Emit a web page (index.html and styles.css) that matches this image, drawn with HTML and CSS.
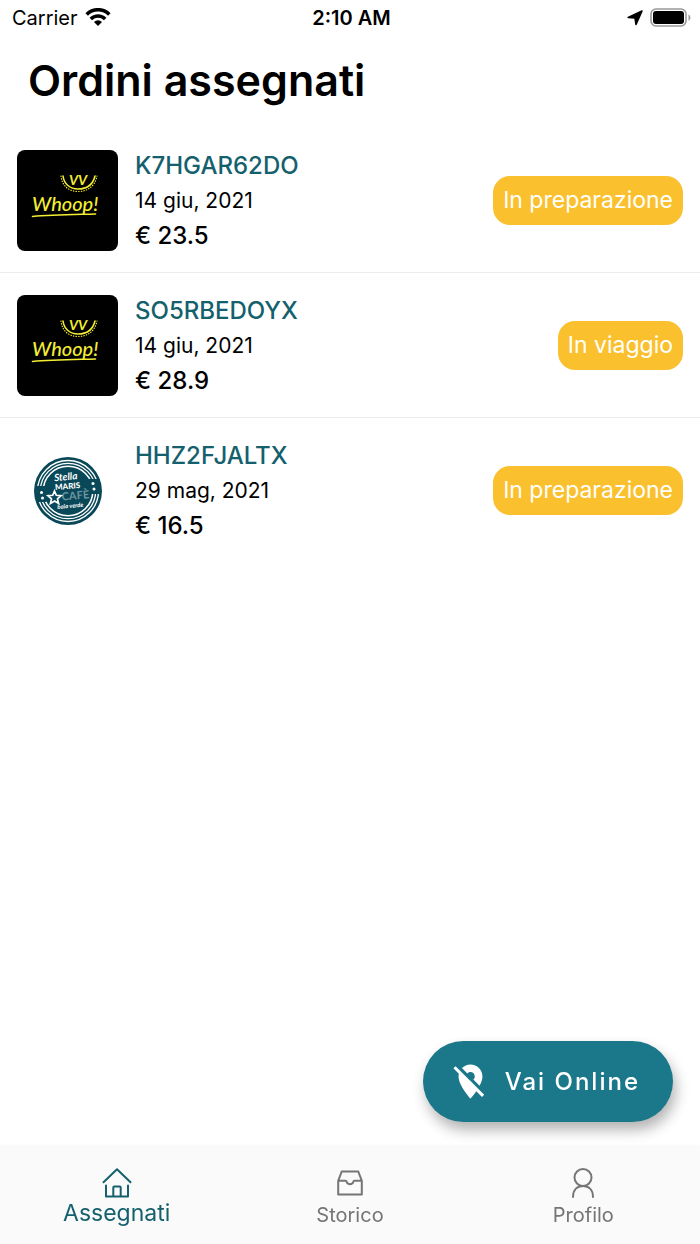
FILE: index.html
```html
<!DOCTYPE html>
<html lang="it">
<head>
  <meta charset="UTF-8">
  <meta name="viewport" content="width=device-width, initial-scale=1.0">
  <title>Ordini assegnati</title>
  <link rel="stylesheet" href="styles.css">
</head>
<body>
  <header class="status-bar">
    <div class="status-bar__carrier">
      <span>Carrier</span>
      <svg width="26" height="20" viewBox="0 0 26 20" fill="none" stroke="#000" stroke-width="3.600" aria-hidden="true">
        <path d="M1.700 6.400a16 16 0 0 1 22.600 0"/>
        <path d="M5.800 11a10.200 10.200 0 0 1 14.400 0"/>
        <path fill="#000" stroke="none" d="M13 18l-4-4a5.700 5.700 0 0 1 8 0z"/>
      </svg>
    </div>
    <div class="status-bar__time">2:10 AM</div>
    <div class="status-bar__icons">
      <svg width="16" height="16" viewBox="0 0 16 16" aria-hidden="true">
        <path d="M15 1L9 14.500 8 8 1.200 7.500z" stroke="#000" stroke-width="1.600" stroke-linejoin="round"/>
      </svg>
      <svg width="41" height="20" viewBox="0 0 41 20" aria-hidden="true">
        <rect x="1" y="1" width="35" height="17" rx="5" fill="none" stroke="#999" stroke-width="1.600"/>
        <rect x="3" y="3" width="31" height="13" rx="3"/>
        <path fill="#999" d="M38.500 6.500c2.500.8 2.500 5.500 0 6.300z"/>
      </svg>
    </div>
  </header>

  <main class="orders">
    <h1 class="orders__title">Ordini assegnati</h1>

    <ul class="orders__list">
      <li class="order">
        <svg class="order__logo" viewBox="0 0 101 101" role="img" aria-label="Whoop!">
          <rect width="101" height="101"/>
          <g fill="none" stroke="#f4ee33" stroke-linecap="round">
            <path stroke-width="1.600" d="M46 26c1 8 7 13 15 13 9 0 15-5 17-13"/>
            <path stroke-width="1.200" stroke-dasharray="0.400 2.200" d="M44 26c1 10 8 15.500 17 15.500 10 0 17-5.500 19-15.500"/>
            <path stroke-width="1.600" d="M15.500 66.500c20-2 44-2 63-2.500"/>
          </g>
          <text class="whoop whoop--small" x="52" y="35">VV</text>
          <text class="whoop" x="15" y="61">Whoop!</text>
        </svg>
        <div class="order__info">
          <div class="order__code">K7HGAR62DO</div>
          <div class="order__date">14 giu, 2021</div>
          <div class="order__price">€ 23.5</div>
        </div>
        <span class="order__status">In preparazione</span>
      </li>
      <li class="order">
        <svg class="order__logo" viewBox="0 0 101 101" role="img" aria-label="Whoop!">
          <rect width="101" height="101"/>
          <g fill="none" stroke="#f4ee33" stroke-linecap="round">
            <path stroke-width="1.600" d="M46 26c1 8 7 13 15 13 9 0 15-5 17-13"/>
            <path stroke-width="1.200" stroke-dasharray="0.400 2.200" d="M44 26c1 10 8 15.500 17 15.500 10 0 17-5.500 19-15.500"/>
            <path stroke-width="1.600" d="M15.500 66.500c20-2 44-2 63-2.500"/>
          </g>
          <text class="whoop whoop--small" x="52" y="35">VV</text>
          <text class="whoop" x="15" y="61">Whoop!</text>
        </svg>
        <div class="order__info">
          <div class="order__code">SO5RBEDOYX</div>
          <div class="order__date">14 giu, 2021</div>
          <div class="order__price">€ 28.9</div>
        </div>
        <span class="order__status">In viaggio</span>
      </li>
      <li class="order">
        <svg class="order__logo" viewBox="0 0 101 101" role="img" aria-label="Stella Maris Cafè">
          <circle cx="51" cy="51" r="34" fill="#094858"/>
          <g fill="none" stroke="#fff">
            <circle cx="51" cy="51" r="30.500" stroke-width="1.300"/>
            <circle cx="51" cy="51" r="27.700" stroke-width="1.300"/>
            <circle cx="51" cy="51" r="24.800" stroke-width="1.600"/>
          </g>
          <path fill="#094858" d="M19.500 46h10v16h-10zM71.500 39h11v15h-11z"/>
          <g fill="#fff">
            <circle cx="24.500" cy="52.500" r="1.500"/>
            <circle cx="25.500" cy="58" r="1.500"/>
            <circle cx="76" cy="43.500" r="1.500"/>
            <circle cx="77" cy="49" r="1.500"/>
          </g>
          <g transform="rotate(-5 51 51)">
            <text class="stella stella--name" x="50" y="40">Stella</text>
            <text class="stella stella--maris" x="51" y="49">MARIS</text>
            <text class="stella stella--cafe" x="58" y="60">CAFÈ</text>
            <text class="stella stella--place" x="52" y="68">baia verde</text>
          </g>
          <path fill="none" stroke="#fff" stroke-width="1.700" d="M37.500 51l1.800 4.300 4.700.400-3.500 3.200 1.100 4.600-4-2.500-4.200 2.500 1.100-4.600-3.600-3.200 4.800-.400z"/>
        </svg>
        <div class="order__info">
          <div class="order__code">HHZ2FJALTX</div>
          <div class="order__date">29 mag, 2021</div>
          <div class="order__price">€ 16.5</div>
        </div>
        <span class="order__status">In preparazione</span>
      </li>
    </ul>
  </main>

  <button class="go-online" type="button">
    <svg width="41" height="41" viewBox="0 0 24 24" fill="#fff" aria-hidden="true">
      <path d="M12 6.500c1.380 0 2.500 1.120 2.500 2.500 0 .74-.33 1.390-.83 1.850l3.630 3.630c.98-1.860 1.700-3.800 1.700-5.480 0-3.870-3.130-7-7-7-1.980 0-3.760.83-5.040 2.150l3.190 3.190c.46-.52 1.110-.84 1.850-.84zm4.370 9.600l-4.630-4.630-.11-.11L3.270 3 2 4.270l3.180 3.180C5.070 7.950 5 8.470 5 9c0 5.250 7 13 7 13s1.670-1.850 3.380-4.350L18.730 21 20 19.730l-3.630-3.630z"/>
    </svg>
    <span>Vai Online</span>
  </button>

  <nav class="tabs">
    <a class="tabs__item is-active" href="#assegnati">
      <svg class="tabs__icon" viewBox="0 0 32 32" aria-hidden="true">
        <path d="M2.500 15.300L16 2.300l13.500 13M5 18.500v11h22v-11M12.300 29.500v-9q0-1 1-1h5.400q1 0 1 1v9"/>
      </svg>
      <span>Assegnati</span>
    </a>
    <a class="tabs__item" href="#storico">
      <svg class="tabs__icon" viewBox="0 0 32 32" aria-hidden="true">
        <path d="M7.700 4.500h16.600l3.500 9.300v13.700H4.200V13.800zM4.200 13.800h7.300q1 0 1.200 1c.4 1.600 1.600 2.400 3.300 2.400s2.900-.8 3.300-2.400q.2-1 1.200-1h7.300"/>
      </svg>
      <span>Storico</span>
    </a>
    <a class="tabs__item" href="#profilo">
      <svg class="tabs__icon" viewBox="0 0 32 32" aria-hidden="true">
        <circle cx="16" cy="10.500" r="8.500"/>
        <path d="M6 30c0-7 4-11 10-11s10 4 10 11"/>
      </svg>
      <span>Profilo</span>
    </a>
  </nav>
</body>
</html>
```
FILE: styles.css
```css
:root {
  --teal: #1b788a;
  --teal-dark: #14616d;
  --yellow: #fbc02d;
  --grey: #757575;
}

* {
  box-sizing: border-box;
}

body {
  display: flex;
  flex-direction: column;
  min-height: 100vh;
  margin: 0;
  background: white;
  color: black;
  font-family: 'Inter', sans-serif;
}

.status-bar {
  display: grid;
  grid-template-columns: 1fr auto 1fr;
  align-items: center;
  height: 36px;
  padding: 0 9px 0 12px;
  font-size: 20px;
}

.status-bar__carrier,
.status-bar__icons {
  display: flex;
  align-items: center;
  gap: 7px;
}

.status-bar__icons {
  justify-content: flex-end;
}

.status-bar__time {
  font-weight: 600;
}

.orders {
  flex: 1;
}

.orders__title {
  margin: 0;
  padding: 14px 28px 18px;
  font-size: 43px;
  font-weight: 600;
  line-height: 60px;
}

.orders__list {
  margin: 0;
  padding: 0;
  list-style: none;
}

.order {
  display: flex;
  align-items: center;
  gap: 17px;
  height: 145px;
  padding: 0 17px;
  border-bottom: 1px solid #ececec;
}

.order:last-child {
  border-bottom: 0;
}

.order__logo {
  flex: none;
  width: 101px;
  height: 101px;
  border-radius: 8px;
}

.order__info {
  flex: 1;
  font-size: 24px;
  line-height: 35px;
}

.order__code {
  color: var(--teal-dark);
  font-weight: 500;
}

.order__date {
  font-size: 21px;
}

.order__price {
  font-weight: 500;
}

.order__status {
  padding: 0 10px;
  border-radius: 17px;
  background: var(--yellow);
  color: white;
  font-size: 23px;
  line-height: 49px;
}

.whoop {
  fill: #f4ee33;
  font-family: 'Lato', sans-serif;
  font-size: 20px;
  font-style: italic;
  font-weight: 500;
}

.whoop--small {
  font-size: 14px;
  font-weight: 700;
}

.stella {
  fill: white;
  font-family: 'Lato', sans-serif;
  font-weight: 700;
  text-anchor: middle;
}

.stella--name {
  font-size: 10px;
  font-style: italic;
}

.stella--maris {
  font-size: 8px;
  font-weight: 900;
}

.stella--cafe {
  fill: #6f95a0;
  font-size: 11px;
}

.stella--place {
  font-size: 6px;
  font-style: italic;
}

.go-online {
  position: fixed;
  right: 27px;
  bottom: 122px;
  display: flex;
  align-items: center;
  gap: 14px;
  height: 81px;
  padding: 0 33px 0 27px;
  border: 0;
  border-radius: 41px;
  background: var(--teal);
  box-shadow: 3px 8px 14px rgba(0, 0, 0, 0.3);
  color: white;
  font-family: inherit;
  font-size: 24px;
  font-weight: 500;
  letter-spacing: 2px;
}

.tabs {
  position: sticky;
  bottom: 0;
  display: flex;
  height: 98px;
  background: #fafafa;
  box-shadow: 0 0 3px rgba(0, 0, 0, 0.06);
}

.tabs__item {
  flex: 1;
  display: flex;
  flex-direction: column;
  align-items: center;
  padding-top: 21px;
  color: var(--grey);
  font-size: 20px;
  line-height: 32px;
  text-decoration: none;
}

.tabs__item.is-active {
  color: var(--teal-dark);
  font-size: 23px;
  line-height: 28px;
}

.tabs__icon {
  width: 32px;
  height: 32px;
  fill: none;
  stroke: currentColor;
  stroke-width: 2;
  stroke-linecap: round;
  stroke-linejoin: round;
}
```
